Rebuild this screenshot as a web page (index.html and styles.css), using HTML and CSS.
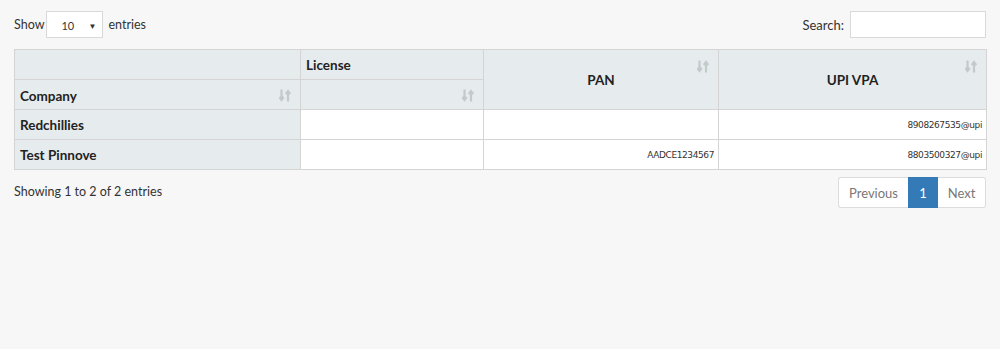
FILE: index.html
```html
<!DOCTYPE html>
<html>
<head>
<meta charset="utf-8">
<link rel="stylesheet" href="styles.css">
</head>
<body>
<div class="wrap">
  <div class="top">
    <label class="len"><span>Show</span><span class="select"><span class="sv">10</span><span class="caret">&#9660;</span></span><span>entries</span></label>
    <label class="search">Search: <span class="input"></span></label>
  </div>
  <table class="grid">
    <thead>
      <tr>
        <th class="c1"></th>
        <th class="c2 lic">License</th>
        <th class="c3 mid sort" rowspan="2">PAN<svg class="ico" viewBox="0 0 12 14"><path d="M2.5 1v9.5M0.3 8.5l2.2 3 2.2-3M9 13V3.5M6.8 5.5l2.2-3 2.2 3" fill="none" stroke="currentColor" stroke-width="2.2"/></svg></th>
        <th class="c4 mid sort" rowspan="2">UPI VPA<svg class="ico" viewBox="0 0 12 14"><path d="M2.5 1v9.5M0.3 8.5l2.2 3 2.2-3M9 13V3.5M6.8 5.5l2.2-3 2.2 3" fill="none" stroke="currentColor" stroke-width="2.2"/></svg></th>
      </tr>
      <tr>
        <th class="c1 sort low">Company<svg class="ico" viewBox="0 0 12 14"><path d="M2.5 1v9.5M0.3 8.5l2.2 3 2.2-3M9 13V3.5M6.8 5.5l2.2-3 2.2 3" fill="none" stroke="currentColor" stroke-width="2.2"/></svg></th>
        <th class="c2 sort low"><svg class="ico" viewBox="0 0 12 14"><path d="M2.5 1v9.5M0.3 8.5l2.2 3 2.2-3M9 13V3.5M6.8 5.5l2.2-3 2.2 3" fill="none" stroke="currentColor" stroke-width="2.2"/></svg></th>
      </tr>
    </thead>
    <tbody>
      <tr>
        <th class="rowh">Redchillies</th>
        <td></td>
        <td></td>
        <td>8908267535@upi</td>
      </tr>
      <tr>
        <th class="rowh">Test Pinnove</th>
        <td></td>
        <td>AADCE1234567</td>
        <td>8803500327@upi</td>
      </tr>
    </tbody>
  </table>
  <div class="bottom">
    <div class="info">Showing 1 to 2 of 2 entries</div>
    <div class="pager">
      <span class="pg prev">Previous</span><span class="pg cur">1</span><span class="pg next">Next</span>
    </div>
  </div>
</div>
</body>
</html>
```
FILE: styles.css
```css
html, body {
  margin: 0;
  padding: 0;
  background: #f7f7f7;
}
body {
  font-family: "Source Sans Pro", Lato, "Noto Sans", sans-serif;
  font-size: 12px;
  color: #333;
}
.wrap {
  padding: 11px 14px 0 14px;
}
.top {
  display: flex;
  justify-content: space-between;
  align-items: center;
  height: 27px;
}
.len, .search {
  display: flex;
  align-items: center;
  gap: 6px;
  color: #333;
}
.len { gap: 0; font-size: 12.5px; }
.select {
  display: inline-flex;
  align-items: center;
  justify-content: space-between;
  box-sizing: border-box;
  width: 57px;
  height: 27px;
  margin: 0 5px 0 2px;
  border: 1px solid #d9d9d9;
  background: #fff;
  padding: 2px 6px 0 14px;
  font-size: 11px;
}
.caret {
  font-size: 8px;
  color: #333;
}
.search { font-size: 13px; }
.input {
  display: inline-block;
  box-sizing: border-box;
  width: 136px;
  height: 27px;
  border: 1px solid #d9d9d9;
  background: #fff;
}
.grid {
  margin-top: 11px;
  width: 972px;
  border-collapse: collapse;
  table-layout: fixed;
  border: 1px solid #d4d4d4;
}
.grid th, .grid td {
  border: 1px solid #d4d4d4;
  height: 30px;
  padding: 0 5px;
  box-sizing: border-box;
}
.grid th {
  background: #e6eced;
  font-weight: 700;
  font-size: 13.5px;
  color: #222;
  text-align: left;
}
.c1 { width: 286px; }
.c2 { width: 183px; }
.c3 { width: 235px; }
.c4 { width: 268px; }
.lic { vertical-align: top; padding-top: 7px !important; }
.grid th.mid { text-align: center; padding-top: 0; }
.sort { position: relative; }
.ico {
  position: absolute;
  right: 9px;
  width: 12px;
  height: 15px;
  color: #c3caca;
}
.mid .ico { top: 9px; }
.low .ico { top: 8px; }
.grid th.rowh { background: #e6eced; }
.grid th.low { padding-top: 2px; }
.grid td {
  background: #fff;
  text-align: right;
  font-size: 9px;
  font-family: Verdana, "DejaVu Sans", sans-serif;
  letter-spacing: -0.4px;
  color: #333;
  padding-right: 4px;
}
.bottom {
  display: flex;
  justify-content: space-between;
  align-items: center;
  margin-top: 7px;
}
.info { margin-top: -2px; font-size: 12.5px; }
.pager {
  display: flex;
  height: 31px;
}
.pg {
  display: flex;
  align-items: center;
  justify-content: center;
  box-sizing: border-box;
  height: 31px;
  border: 1px solid #ddd;
  background: #fff;
  color: #777;
  font-size: 13px;
}
.prev { width: 70px; border-radius: 3px 0 0 3px; border-right: none; }
.cur { width: 30px; background: #337ab7; border-color: #337ab7; color: #fff; }
.next { width: 48px; border-radius: 0 3px 3px 0; border-left: none; }
```
